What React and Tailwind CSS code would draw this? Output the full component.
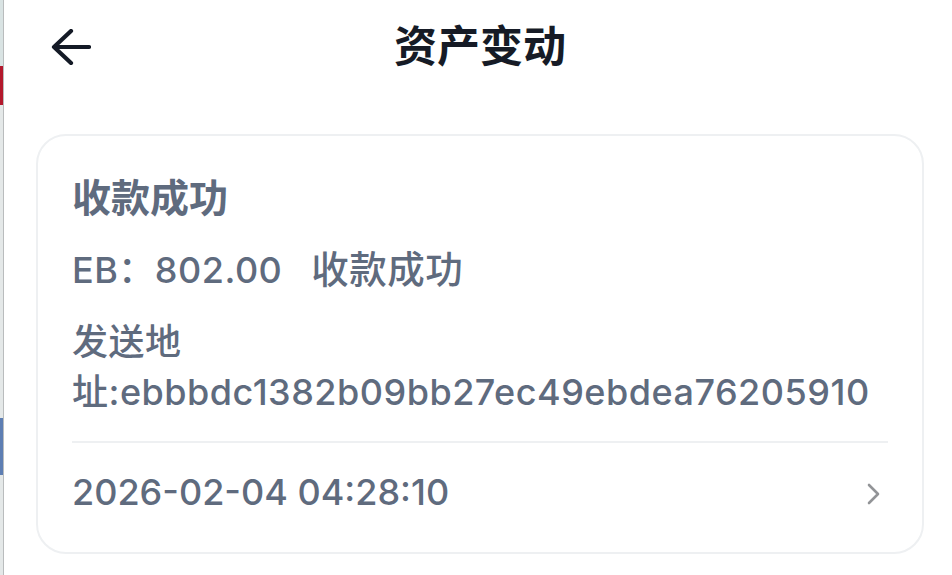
const RECORD = {
  title: '收款成功',
  amount: 'EB：802.00',
  status: '收款成功',
  address: '发送地址:ebbbdc1382b09bb27ec49ebdea76205910',
  time: '2026-02-04 04:28:10',
}

function BackArrow() {
  return (
    <svg width="40" height="36" viewBox="0 0 40 36" fill="none">
      <path
        d="M38 18H3M20 2 3 18l17 16"
        stroke="#141a26"
        strokeWidth="4.2"
        strokeLinecap="round"
        strokeLinejoin="round"
      />
    </svg>
  )
}

function Chevron() {
  return (
    <svg width="16" height="24" viewBox="0 0 16 24" fill="none">
      <path d="M3 3l9 9-9 9" stroke="#929497" strokeWidth="2.6" strokeLinecap="round" strokeLinejoin="round" />
    </svg>
  )
}

export default function App() {
  return (
    <div
      className="flex h-[575px] w-[952px] overflow-hidden bg-white"
      style={{ fontFamily: 'Inter, "Noto Sans CJK SC", sans-serif' }}
    >
      {/* sliver of the window behind */}
      <div className="flex w-[4px] shrink-0 flex-col border-r border-[#b9bcbd] bg-[#e4e8e8]">
        <div className="h-[66px] bg-[#d9e3e3]" />
        <div className="h-[39px] bg-[#b3182c]" />
        <div className="h-[313px]" />
        <div className="h-[57px] bg-[#5d7eb3]" />
      </div>

      <div className="flex flex-1 flex-col pl-[32px] pr-[28px]">
        {/* Header */}
        <header className="grid h-[92px] shrink-0 grid-cols-[1fr_auto_1fr] items-center">
          <div className="pl-[15px] pt-[2px]">
            <BackArrow />
          </div>
          <h1 className="text-[43px] font-bold leading-none text-[#161b26]">资产变动</h1>
          <div />
        </header>

        {/* Card */}
        <div className="mt-[42px] rounded-[30px] border-2 border-[#eef0f2] px-[34px] pt-[37px] pb-[35px] text-[36px] font-medium leading-[50px] text-[#5f6b7e]">
          <p className="text-[39px] font-bold">{RECORD.title}</p>
          <p className="mt-[22px] tracking-[0.5px]">
            {RECORD.amount}
            <span className="ml-[29px] text-[37.5px]">{RECORD.status}</span>
          </p>
          <p className="mt-[22px] tracking-[0.5px]">{RECORD.address}</p>
          <div className="mt-[24px] h-[2px] bg-[#eef0f2]" />
          <div className="mt-[24px] flex items-center justify-between">
            <span>{RECORD.time}</span>
            <div className="mr-[6px] mt-[4px]">
              <Chevron />
            </div>
          </div>
        </div>
      </div>
    </div>
  )
}
